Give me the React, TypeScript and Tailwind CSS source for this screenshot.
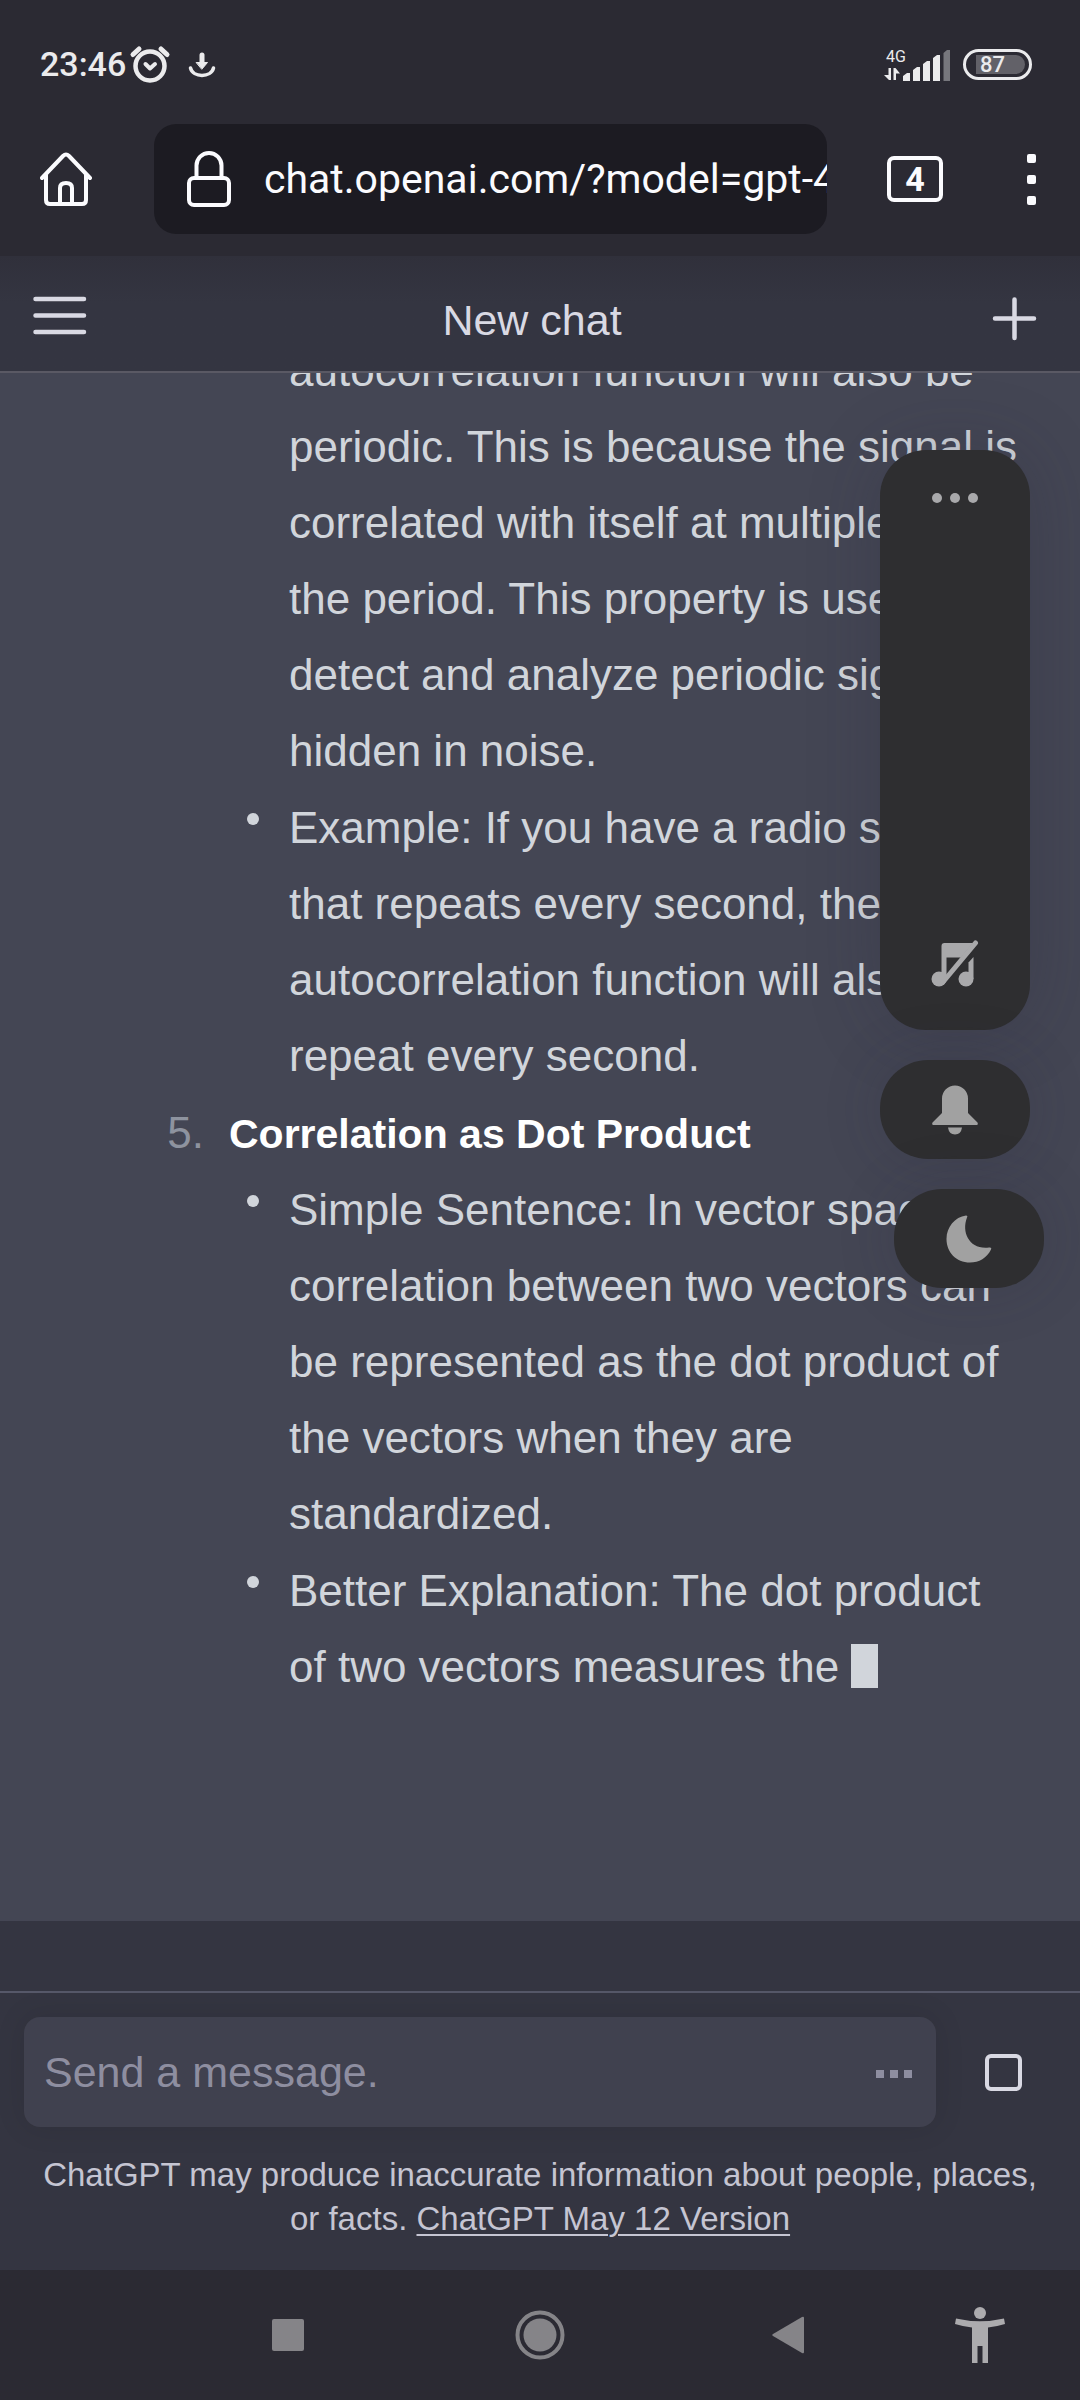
import type { ReactNode } from "react";

function StatusBar() {
  return (
    <div className="flex h-[124px] items-center justify-between pt-1 pr-12 pl-10 font-['Roboto',sans-serif] text-[#ebebed]">
      <div className="flex items-center">
        <time className="text-[34px] leading-10 font-medium">23:46</time>
        <svg className="h-10 w-12" viewBox="0 0 48 40" fill="none" stroke="currentColor" strokeLinecap="round">
          <circle cx="24" cy="22" r="14.500" strokeWidth="4.500" />
          <path d="M7 10.500 L13 5 M41 10.500 L35 5" strokeWidth="5" />
          <path d="M19.500 20 L24 24.500 L29 20" strokeWidth="4" strokeLinejoin="round" />
        </svg>
        <svg className="ml-2 h-10 w-12" viewBox="0 0 48 40" fill="none" stroke="currentColor" strokeLinecap="round">
          <path d="M20 11 V20" strokeWidth="5" />
          <path d="M14.500 18.500 H25.500 L20 25 Z" fill="currentColor" strokeWidth="1" strokeLinejoin="round" />
          <path d="M8.500 24 C11 34 29 34 31.500 24" strokeWidth="3.500" />
        </svg>
      </div>
      <div className="flex items-center gap-3">
        <div className="flex items-end gap-[3px]">
          <div className="flex w-4 flex-col items-center">
            <span className="pl-2 text-base leading-5">4G</span>
            <svg className="h-[14px] w-4" viewBox="0 0 16 14" fill="currentColor">
              <path d="M4.500 1 H7 V13 H5 L0 8 H4.500 Z M9.500 1 H11.500 L16 6.500 H12 V13 H9.500 Z" />
            </svg>
          </div>
          <svg className="h-8 w-12" viewBox="0 0 48 32" fill="currentColor">
            <path d="M0 27 L4 24 H7 V32 H0 Z M10 21 L14 18 H17 V32 H10 Z M20 15 L24 12 H27 V32 H20 Z M30 9 L34 6 H37 V32 H30 Z" />
            <path d="M40.500 4 L44 1 H47 V32 H40.500 Z" opacity="0.4" />
          </svg>
        </div>
        <div className="flex h-[31px] w-[69px] items-center rounded-full border-[3px] border-current pl-[10px]">
          <div className="flex h-[19px] w-[49px] items-center rounded-l-xs rounded-r-full bg-[#626168] pl-1">
            <span className="pt-px text-[22px] leading-6 font-medium">87</span>
          </div>
        </div>
      </div>
    </div>
  );
}

function BrowserBar() {
  return (
    <div className="flex items-start pb-[22px] pl-10 text-[#fbfbfe]">
      <button aria-label="Home" className="flex h-[110px] w-[54px] items-center">
        <svg className="h-[54px] w-[54px]" viewBox="0 0 54 54" fill="none" stroke="currentColor" strokeWidth="4" strokeLinecap="round" strokeLinejoin="round">
          <path d="M2 26 L23 4 Q26 1 29 4 L50 26" />
          <path d="M6 23 V48 Q6 52 10 52 H42 Q46 52 46 48 V23" />
          <path d="M20 51 V36 Q20 31 26 31 Q32 31 32 36 V51" />
        </svg>
      </button>
      <div className="ml-[60px] flex h-[110px] min-w-0 flex-1 items-center rounded-[22px] bg-[#1c1b22] pl-8">
        <svg className="h-14 w-[46px] shrink-0" viewBox="0 0 46 56" fill="none" stroke="currentColor" strokeWidth="4" role="img" aria-label="Secure">
          <rect x="3" y="27" width="40" height="27" rx="5" />
          <path d="M10.500 27 V14.500 A12.500 12.500 0 0 1 35.500 14.500 V27" />
        </svg>
        <input
          aria-label="Address"
          defaultValue="chat.openai.com/?model=gpt-4"
          className="ml-8 h-16 w-full min-w-0 flex-1 bg-transparent font-['Roboto',sans-serif] text-[41px] outline-none"
        />
      </div>
      <button aria-label="4 open tabs" className="ml-[60px] flex h-[110px] w-14 items-center">
        <span className="flex h-[46px] w-14 items-center justify-center rounded-[7px] border-4 border-current font-['Roboto',sans-serif] text-[34px] leading-8 font-bold">
          4
        </span>
      </button>
      <button aria-label="Menu" className="mr-11 ml-[84px] flex h-[110px] w-[9px] flex-col items-center justify-center gap-3">
        <span className="h-[9px] w-[9px] rounded-xs bg-current" />
        <span className="h-[9px] w-[9px] rounded-xs bg-current" />
        <span className="h-[9px] w-[9px] rounded-xs bg-current" />
      </button>
    </div>
  );
}

function ChatHeader() {
  return (
    <header className="flex h-[117px] items-center justify-between border-b-2 border-[#5a5964] bg-linear-to-b from-[#30303b] to-[#343541] to-40% pr-9 pl-8 text-[#d9d9e3]">
      <button aria-label="Open sidebar">
        <svg className="h-14 w-14" viewBox="0 0 56 56" fill="none" stroke="currentColor" strokeWidth="4.500" strokeLinecap="round">
          <path d="M3.500 13 H52 M3.500 29.500 H52 M3.500 46 H52" />
        </svg>
      </button>
      <h1 className="pt-3 pr-3 text-[43px] leading-[60px]">New chat</h1>
      <button aria-label="New chat">
        <svg className="h-14 w-14" viewBox="0 0 56 56" fill="none" stroke="currentColor" strokeWidth="4.500" strokeLinecap="round">
          <path d="M26.500 13.500 V52 M7 32.500 H46" />
        </svg>
      </button>
    </header>
  );
}

function Bullet({ children }: { children: ReactNode }) {
  return (
    <li className="flex items-start">
      <span className="mt-[23px] mr-[30px] h-3 w-3 shrink-0 rounded-full bg-[#d1d5db]" />
      <p>{children}</p>
    </li>
  );
}

function Message() {
  return (
    <article className="shrink-0 bg-[#444654] pr-[60px] pb-[216px] text-[44px] leading-[76px] text-[#d1d5db]">
      <ul className="flex flex-col gap-px pl-[247px]">
        <li className="pl-[42px]">
          <p>
            autocorrelation function will also be periodic. This is because the signal is correlated with itself at
            multiples of the period. This property is used to detect and analyze periodic signals hidden in noise.
          </p>
        </li>
        <Bullet>
          Example: If you have a radio signal that repeats every second, the autocorrelation function will also repeat
          every second.
        </Bullet>
      </ul>
      <div className="mt-px flex items-baseline">
        <span className="w-[229px] pr-[25px] text-right text-[#8e939f]">5.</span>
        <h2 className="text-[41px] font-bold text-white">Correlation as Dot Product</h2>
      </div>
      <ul className="flex flex-col gap-px pl-[247px]">
        <Bullet>
          Simple Sentence: In vector space, correlation between two vectors can be represented as the dot product of
          the vectors when they are standardized.
        </Bullet>
        <Bullet>
          Better Explanation: The dot product of two vectors measures the{" "}
          <span className="inline-block h-11 w-[27px] bg-[#d1d5db] align-[-6px]" />
        </Bullet>
      </ul>
    </article>
  );
}

function Composer() {
  return (
    <footer className="border-t-2 border-[#565869] bg-[#343541] px-6 pt-6">
      <div className="flex items-center">
        <div className="flex h-[110px] flex-1 items-center rounded-2xl bg-[#40414f] pr-6 pl-5 shadow-[0_0_30px_rgba(0,0,0,0.1)]">
          <input
            aria-label="Message"
            placeholder="Send a message."
            className="h-16 min-w-0 flex-1 bg-transparent text-[43px] text-[#d9d9e3] outline-none placeholder:text-[#8e8ea0]"
          />
          <span className="flex gap-[6px] pt-1">
            <span className="h-2 w-2 bg-[#8e8ea0]" />
            <span className="h-2 w-2 bg-[#8e8ea0]" />
            <span className="h-2 w-2 bg-[#8e8ea0]" />
          </span>
        </div>
        <button aria-label="Stop generating" className="mr-[34px] ml-[49px] h-[37px] w-[37px] rounded-[6px] border-4 border-[#d9d9e3]" />
      </div>
      <p className="px-4 pt-[26px] pb-[29px] text-center text-[33px] leading-[44px] text-[#c5c5d2]">
        ChatGPT may produce inaccurate information about people, places, or facts.{" "}
        <a href="#release-notes" className="underline decoration-2 underline-offset-4">
          ChatGPT May 12 Version
        </a>
      </p>
    </footer>
  );
}

function NavBar() {
  return (
    <nav className="relative flex h-[130px] shrink-0 items-center justify-center bg-[#2b2a33] pr-1 text-[#858488]">
      <div className="flex items-center">
        <button aria-label="Recent apps" className="h-8 w-8 rounded-xs bg-current" />
        <button aria-label="Home screen" className="mr-[207px] ml-[211px]">
          <svg className="h-[50px] w-[50px]" viewBox="0 0 50 50">
            <circle cx="25" cy="25" r="22.500" fill="none" stroke="currentColor" strokeWidth="4" />
            <circle cx="25" cy="25" r="16.500" fill="currentColor" />
          </svg>
        </button>
        <button aria-label="Back">
          <svg className="h-10 w-8" viewBox="0 0 32 40" fill="currentColor">
            <path d="M1 19 L30 2 Q32 1 32 3 V37 Q32 39 30 38 L1 21 Q-0.500 20 1 19 Z" />
          </svg>
        </button>
      </div>
      <button aria-label="Accessibility" className="absolute right-[75px]">
        <svg className="h-[58px] w-[50px] text-[#acabae]" viewBox="0 0 50 58" fill="currentColor">
          <circle cx="25" cy="7" r="6" />
          <path d="M1 12.500 Q25 18 49 12.500 L50 18 Q42 20.500 33 21.500 V57 H27.500 V40 H22.500 V57 H17 V21.500 Q8 20.500 0 18 Z" />
        </svg>
      </button>
    </nav>
  );
}

function VolumePanel() {
  return (
    <aside className="absolute top-[450px] right-9 flex w-[164px] flex-col gap-[30px] text-[#a9a9ab]">
      <div className="flex h-[580px] w-[150px] flex-col items-center justify-between rounded-[46px] bg-[#2e2e30] pt-[43px] pb-[42px] shadow-[0_0_70px_rgba(40,40,60,0.25)]">
        <button aria-label="Sound settings" className="flex gap-2">
          <span className="h-[10px] w-[10px] rounded-full bg-current" />
          <span className="h-[10px] w-[10px] rounded-full bg-current" />
          <span className="h-[10px] w-[10px] rounded-full bg-current" />
        </button>
        <button aria-label="Media muted">
          <svg className="h-12 w-12" viewBox="0 0 48 48" fill="currentColor">
            <circle cx="8" cy="39" r="7.500" />
            <circle cx="35" cy="39" r="7.500" />
            <path d="M10.500 39 V6 Q10.500 3 13.500 3 H42 L30 17.500 H15.500 V39 Z" />
            <path d="M37.500 22.500 L42.500 17 V39 H37.500 Z" />
            <path d="M12 42 L44.500 3" stroke="currentColor" strokeWidth="5" strokeLinecap="round" />
          </svg>
        </button>
      </div>
      <button aria-label="Ring" className="flex h-[99px] w-[150px] items-center justify-center rounded-[48px] bg-[#2e2e30] text-[#a1a1a1] shadow-[0_0_60px_rgba(40,40,60,0.2)]">
        <svg className="h-[50px] w-[46px]" viewBox="0 0 46 50" fill="currentColor">
          <path d="M10 28 V13.500 A13 13 0 0 1 36 13.500 V28 L45.500 37.500 Q46.500 40 44.500 40 H1.500 Q-0.500 40 0.500 37.500 Z" />
          <path d="M16 42.500 H30 Q29 49.500 23 49.500 Q17 49.500 16 42.500 Z" />
        </svg>
      </button>
      <button aria-label="Do not disturb" className="flex h-[99px] w-[150px] items-center justify-center self-end rounded-[48px] bg-[#2e2e30] text-[#a1a1a1] shadow-[0_0_60px_rgba(40,40,60,0.2)]">
        <svg className="h-12 w-[46px]" viewBox="0 0 46 48" fill="currentColor">
          <path d="M20 0.500 Q22 0.500 21 2.500 C15 18 24 35 43 32.500 Q46 32 45 34.500 C41 43 33 47.500 24 47.500 C10 47.500 0.500 37 0.500 24 C0.500 12 9 2 20 0.500 Z" />
        </svg>
      </button>
    </aside>
  );
}

export default function App() {
  return (
    <div className="relative flex h-screen flex-col overflow-hidden bg-[#343541] font-['Liberation_Sans',Arial,sans-serif]">
      <div className="shrink-0 bg-[#2b2a33]">
        <StatusBar />
        <BrowserBar />
      </div>
      <ChatHeader />
      <main className="flex min-h-0 flex-1 flex-col justify-end overflow-hidden pb-[70px]">
        <Message />
      </main>
      <Composer />
      <NavBar />
      <VolumePanel />
    </div>
  );
}
